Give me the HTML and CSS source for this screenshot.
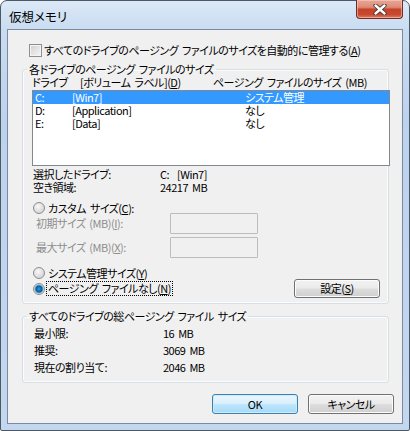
FILE: index.html
```html
<!DOCTYPE html>
<html lang="ja">
<head>
<meta charset="utf-8">
<title>仮想メモリ</title>
<link rel="stylesheet" href="styles.css">
</head>
<body>
<div class="window">
  <div class="titlebar">
    <span class="title">仮想メモリ</span>
    <div class="close">
      <svg width="14" height="11" viewBox="0 0 14 11">
        <path d="M2.5 1.5 L11.5 9.5 M11.5 1.5 L2.5 9.5" stroke="#3d3434" stroke-width="4.2" stroke-linecap="round" fill="none"/>
        <path d="M2.5 1.5 L11.5 9.5 M11.5 1.5 L2.5 9.5" stroke="#ffffff" stroke-width="2.4" stroke-linecap="round" fill="none"/>
      </svg>
    </div>
  </div>
  <div class="client">
    <div class="auto-row">
      <span class="checkbox"></span>
      <span>すべてのドライブのページング ファイルのサイズを自動的に管理する(<u>A</u>)</span>
    </div>

    <fieldset class="group group-drives">
      <legend>各ドライブのページング ファイルのサイズ</legend>
      <div class="list-header">
        <span class="hcol-drive">ドライブ</span>
        <span class="hcol-label">[ボリューム ラベル](<u>D</u>)</span>
        <span class="hcol-size">ページング ファイルのサイズ (MB)</span>
      </div>
      <div class="listbox">
        <div class="list-row selected"><span class="c1">C:</span><span class="c2">[Win7]</span><span class="c3">システム管理</span></div>
        <div class="list-row"><span class="c1">D:</span><span class="c2">[Application]</span><span class="c3">なし</span></div>
        <div class="list-row"><span class="c1">E:</span><span class="c2">[Data]</span><span class="c3">なし</span></div>
      </div>
      <div class="info-row first"><span class="info-label">選択したドライブ:</span><span>C:&nbsp;&nbsp;[Win7]</span></div>
      <div class="info-row"><span class="info-label">空き領域:</span><span>24217 MB</span></div>

      <div class="radio-row custom"><span class="radio"></span><span>カスタム サイズ(<u>C</u>):</span></div>
      <div class="size-row first"><span class="size-label">初期サイズ (MB)(<u>I</u>):</span><span class="edit"></span></div>
      <div class="size-row second"><span class="size-label">最大サイズ (MB)(<u>X</u>):</span><span class="edit"></span></div>
      <div class="radio-row system"><span class="radio"></span><span>システム管理サイズ(<u>Y</u>)</span></div>
      <div class="radio-row nopage">
        <span class="radio checked"></span>
        <span class="focus">ページング ファイルなし(<u>N</u>)</span>
        <button class="btn set-btn">設定(<u>S</u>)</button>
      </div>
    </fieldset>

    <fieldset class="group group-total">
      <legend>すべてのドライブの総ページング ファイル サイズ</legend>
      <div class="total-row first"><span class="total-label">最小限:</span><span>16 MB</span></div>
      <div class="total-row"><span class="total-label">推奨:</span><span>3069 MB</span></div>
      <div class="total-row"><span class="total-label">現在の割り当て:</span><span>2046 MB</span></div>
    </fieldset>

    <div class="buttons">
      <button class="btn default">OK</button>
      <button class="btn">キャンセル</button>
    </div>
  </div>
</div>
</body>
</html>
```

FILE: styles.css
```css
html, body {
  margin: 0;
  padding: 0;
}
body {
  width: 410px;
  height: 431px;
  overflow: hidden;
  background: #ffffff;
  font-family: "Noto Sans CJK JP", "Noto Sans", sans-serif;
  font-size: 11px;
  letter-spacing: -0.5px;
  word-spacing: 2px;
  line-height: 13px;
  color: #000;
  font-feature-settings: "palt";
  white-space: nowrap;
}
u { text-decoration: underline; text-underline-offset: 1px; }

.window {
  width: 410px;
  height: 431px;
  box-sizing: border-box;
  border: 1px solid #4d5866;
  border-radius: 7px 7px 2px 2px;
  background: linear-gradient(#dce9f7 0px, #c9dcf1 28px, #bcd3ec 120px, #c3d8ef 431px);
  padding: 0 6px 6px 6px;
  display: flex;
  flex-direction: column;
}

.titlebar {
  height: 28px;
  display: flex;
  align-items: flex-start;
  justify-content: space-between;
  flex: none;
}
.title {
  margin: 8px 0 0 2px;
  font-size: 12.5px;
  letter-spacing: 0;
  line-height: 15px;
  color: #000;
}
.close {
  width: 47px;
  height: 19px;
  box-sizing: border-box;
  margin-top: -1px;
  border: 1px solid #6e2d22;
  border-top: none;
  border-radius: 0 0 4px 4px;
  background: linear-gradient(#e7a797 0%, #de8b77 40%, #c4432a 52%, #c9482e 80%, #e07a5f 100%);
  box-shadow: inset 0 0 0 1px rgba(255, 210, 200, 0.55);
  display: flex;
  align-items: center;
  justify-content: center;
}
.close svg { display: block; margin-top: 1px; }

.client {
  flex: 1;
  box-sizing: border-box;
  border: 1px solid #7b8aa0;
  background: #f0f0f0;
  display: flex;
  flex-direction: column;
}

/* top checkbox row */
.auto-row {
  margin-top: 13px;
  height: 14px;
  padding-left: 21px;
  display: flex;
  align-items: center;
}
.checkbox {
  width: 13px;
  height: 13px;
  box-sizing: border-box;
  border: 1px solid #8e8f8f;
  background: linear-gradient(135deg, #d0d0d0, #f6f6f6);
  box-shadow: inset 0 0 0 1px #f4f4f4;
  margin-right: 2px;
  flex: none;
}

/* group boxes */
.group {
  margin: 6px 0 0 14px;
  padding: 0;
  width: 367px;
  box-sizing: border-box;
  border: 1px solid #d5dfe5;
  border-radius: 3px;
  box-shadow: inset 0 0 0 1px #fbfbfb;
  min-width: 0;
}
.group legend {
  margin-left: 4px;
  padding: 0 2px;
  line-height: 12px;
  height: 12px;
}
.group-drives { padding-bottom: 5px; }
.group-total { padding-bottom: 6px; }

.list-header {
  margin-top: 1px;
  height: 12px;
  line-height: 12px;
  padding-left: 9px;
  display: flex;
  align-items: center;
}
.hcol-drive { width: 48px; }
.hcol-label { width: 133px; }

.listbox {
  margin: 2px 0 0 9px;
  width: 358px;
  height: 76px;
  box-sizing: border-box;
  border: 1px solid #828790;
  background: #ffffff;
}
.list-row {
  height: 13px;
  display: flex;
  align-items: center;
}
.list-row.selected {
  background: #3399ff;
  color: #ffffff;
}
.c1 { width: 37px; padding-left: 2px; }
.c2 { width: 173px; }

.info-row {
  height: 13px;
  padding-left: 10px;
  display: flex;
  align-items: center;
}
.info-row.first { margin-top: 2px; }
.info-label { width: 127px; }

.radio-row {
  padding-left: 10px;
  display: flex;
  align-items: center;
}
.radio-row.custom { margin-top: 7px; height: 14px; }
.radio-row.system { margin-top: 8px; height: 14px; }
.radio-row.nopage { margin-top: -1px; height: 19px; }

.radio {
  width: 12px;
  height: 12px;
  box-sizing: border-box;
  border-radius: 50%;
  border: 1px solid #8c8c8c;
  background: radial-gradient(circle at 40% 35%, #f8f8f8 0%, #dcdcdc 60%, #cfcfcf 100%);
  margin-right: 3px;
  flex: none;
}
.radio.checked {
  background: radial-gradient(circle at 50% 50%, #2e9be0 0px, #0a5b98 3px, #6aa9d6 4px, #eaeaea 5px, #d8d8d8 6px);
}
.focus {
  outline: 1px dotted #000;
  outline-offset: 0;
  padding: 0 1px;
  margin-left: -1px;
}

.size-row {
  height: 21px;
  padding-left: 13px;
  display: flex;
  align-items: center;
  color: #8d8d8d;
}
.size-row.first { margin-top: -2px; }
.size-row.second { margin-top: 3px; }
.size-label { width: 134px; }
.edit {
  width: 88px;
  height: 21px;
  box-sizing: border-box;
  border: 1px solid #bcbcbc;
  border-radius: 1px;
  background: #f0f0f0;
}

/* buttons */
.btn {
  font-family: inherit;
  font-size: 11px;
  letter-spacing: inherit;
  word-spacing: inherit;
  line-height: 13px;
  font-feature-settings: "palt";
  color: #000;
  width: 86px;
  box-sizing: border-box;
  padding: 0;
  border: 1px solid #707070;
  border-radius: 3px;
  background: linear-gradient(#f2f2f2 0%, #ebebeb 48%, #dddddd 52%, #cfcfcf 100%);
  box-shadow: inset 0 0 0 1px #fcfcfc;
}
.set-btn {
  height: 19px;
  margin-left: auto;
  margin-right: 8px;
}
.btn.default {
  border-color: #3c7fb1;
  background: linear-gradient(#eaf6fd 0%, #d9f0fc 48%, #bee6fd 52%, #a7d9f5 100%);
  box-shadow: inset 0 0 0 1px #d0ecfb;
}

.total-row {
  height: 17px;
  padding-left: 11px;
  display: flex;
  align-items: center;
}
.total-row.first { margin-top: 3px; }
.total-label { width: 129px; }

.buttons {
  margin: 11px 8px 0 0;
  display: flex;
  justify-content: flex-end;
  gap: 10px;
}
.buttons .btn { height: 20px; }
```
